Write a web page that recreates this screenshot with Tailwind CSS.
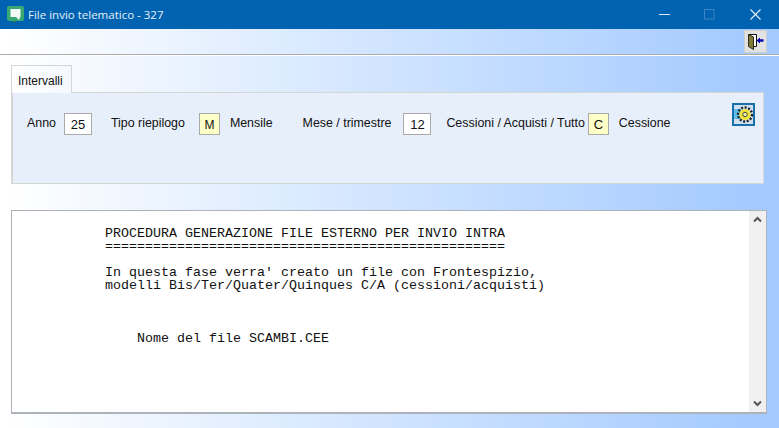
<!DOCTYPE html>
<html lang="it">
<head>
    <meta charset="UTF-8">
    <title>File invio telematico - 327</title>
    <script src="https://cdn.jsdelivr.net/npm/@tailwindcss/browser@4"></script>
</head>
<body class="w-[779px] h-[428px] overflow-hidden bg-gradient-to-r from-white from-[1%] to-[#a4caff] to-[96%] font-['Liberation_Sans',sans-serif] text-[#111]">
    <!-- title bar -->
    <div class="h-[29px] bg-[#0063b1] flex items-center text-white">
        <svg class="ml-[7px] mr-[4px]" width="17" height="17" viewBox="0 0 17 17">
            <rect x="0" y="0" width="17" height="15" rx="2" fill="#3aa873"/>
            <path d="M6 15 L6 17 L10 15 Z" fill="#1d7a4e"/>
            <rect x="3.5" y="3" width="10" height="8" fill="#f2fbf6"/>
            <path d="M9 11 L12 14 L13 11 Z" fill="#f2fbf6"/>
        </svg>
        <span class="text-[11.5px] font-['Open_Sans',sans-serif] text-[#e6f0f9]">File invio telematico - 327</span>
        <div class="ml-auto flex items-center">
            <svg class="mr-[34px]" width="11" height="11" viewBox="0 0 11 11"><path d="M0 5.5H11" stroke="#dfeaf5" stroke-width="1"/></svg>
            <svg class="mr-[35px]" width="11" height="11" viewBox="0 0 11 11"><rect x="0.5" y="0.5" width="9.5" height="9.5" fill="none" stroke="#3d84c0"/></svg>
            <svg class="mr-[18px]" width="11" height="11" viewBox="0 0 11 11"><path d="M0.5 0.5L10.5 10.5M10.5 0.5L0.5 10.5" stroke="#e8f0f8" stroke-width="1.1"/></svg>
        </div>
    </div>

    <!-- toolbar -->
    <div class="h-[26px] border-b border-[#ababab] shadow-[0_1px_0_#fff] flex justify-end items-start pt-[1px] pr-[12px]">
        <button class="w-[23px] h-[23px] bg-[#e2e2e2] border border-[#cfcfcf] flex items-center justify-center">
            <svg width="17" height="16" viewBox="0 0 17 16">
                <path d="M1.5 0.5H9.5V12.5H6" fill="#fff" stroke="#111"/>
                <path d="M1.5 0.5L6.5 3V15.5L1.5 12.5Z" fill="#7d7a35" stroke="#1c1c10" stroke-width="0.9"/>
                <path d="M9.5 6.5L13 3.5V5.3H16.5V7.8H13V9.5Z" fill="#0808b0"/>
            </svg>
        </button>
    </div>

    <!-- tab + panel -->
    <div class="ml-[11px] mr-[15px] mt-[10px]">
        <div class="w-[61px] h-[28px] -mb-px relative z-10 bg-gradient-to-r from-white to-[#f4f8fe] border border-[#d6d6d6] border-b-0 text-[12px] pl-[6px] pt-[6px]">Intervalli</div>
        <div class="h-[92px] bg-[#e7effb] border border-[#d6d6d6] border-l-2 flex items-start pt-[19px] text-[12.4px] relative">
            <span class="ml-[14px] mt-[2px]">Anno</span>
            <div class="ml-[8px] w-[28px] h-[22px] mt-[1px] bg-white border border-[#aaa] text-[13px] flex items-center justify-center pt-[2px]">25</div>
            <span class="ml-[19px] mt-[2px]">Tipo riepilogo</span>
            <div class="ml-[14px] w-[21px] h-[22px] mt-[1px] bg-[#ffffc8] border border-[#aaa] text-[12px] flex items-center justify-center pt-[2px]">M</div>
            <span class="ml-[10px] mt-[2px]">Mensile</span>
            <span class="ml-[30px] mt-[2px]">Mese / trimestre</span>
            <div class="ml-[12px] w-[28px] h-[22px] mt-[1px] bg-white border border-[#aaa] text-[13px] flex items-center justify-center pt-[2px]">12</div>
            <span class="ml-[15px] mt-[2px]">Cessioni / Acquisti / Tutto</span>
            <div class="ml-[3px] w-[21px] h-[22px] mt-[1px] bg-[#ffffc8] border border-[#aaa] text-[13px] flex items-center justify-center pt-[2px]">C</div>
            <span class="ml-[10px] mt-[2px]">Cessione</span>
            <!-- run button sits over the panel corner -->
            <button class="absolute left-[719px] top-[10px] w-[23px] h-[23px] bg-[#cfe0f0] border-2 border-[#1a6fa8] flex items-center justify-center">
                <svg width="19" height="19" viewBox="0 0 19 19">
                    <rect x="0" y="4" width="7" height="10" fill="#5fbde8"/>
                    <circle cx="11" cy="9.5" r="7" fill="none" stroke="#222" stroke-width="2.4" stroke-dasharray="2 1.6"/>
                    <circle cx="11" cy="9.5" r="5.6" fill="#efe23a"/>
                    <circle cx="11" cy="9.5" r="2.2" fill="#fdf9b0" stroke="#444" stroke-width="1"/>
                </svg>
            </button>
        </div>
    </div>

    <!-- output text -->
    <div class="ml-[11px] mr-[12px] mt-[26px] h-[204px] bg-white border border-[#aeb2ba] border-b-2 flex">
        <pre class="flex-1 font-['Liberation_Mono',monospace] text-[13.33px] leading-[13.1px] pl-[93px] pt-[16px] text-[#111]">PROCEDURA GENERAZIONE FILE ESTERNO PER INVIO INTRA
==================================================

In questa fase verra' creato un file con Frontespizio,
modelli Bis/Ter/Quater/Quinques C/A (cessioni/acquisti)



    Nome del file SCAMBI.CEE</pre>
        <div class="w-[17px] bg-[#f0f0f0] flex flex-col justify-between items-center py-[5px]">
            <svg width="9" height="7" viewBox="0 0 9 7"><path d="M1 5.5L4.5 2L8 5.5" fill="none" stroke="#555" stroke-width="2"/></svg>
            <svg width="9" height="7" viewBox="0 0 9 7"><path d="M1 1.5L4.5 5L8 1.5" fill="none" stroke="#555" stroke-width="2"/></svg>
        </div>
    </div>
</body>
</html>
